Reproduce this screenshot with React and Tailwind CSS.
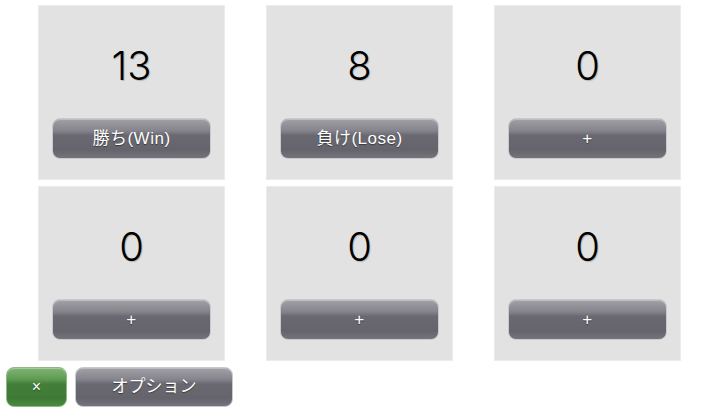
const PANELS = [
  { value: 13, label: "勝ち(Win)" },
  { value: 8, label: "負け(Lose)" },
  { value: 0, label: "+" },
  { value: 0, label: "+" },
  { value: 0, label: "+" },
  { value: 0, label: "+" },
];

function GlossButton({ children, green = false, className = "" }) {
  return (
    <button
      className={`relative overflow-hidden rounded-[8px] border text-white [text-shadow:0_1px_1px_rgba(0,0,0,0.45)] shadow-[inset_0_1px_0_rgba(255,255,255,0.3)] ${
        green
          ? "border-[#8fb886] bg-[linear-gradient(#7fb472_0%,#5f9a53_30%,#437f39_42%,#3e7a35_80%,#4a8a41_100%)]"
          : "border-[#c9c8cc] bg-[linear-gradient(#a2a1a7_0%,#85838b_30%,#6a6870_42%,#65636b_80%,#75737b_100%)]"
      } ${className}`}
    >
      {children}
    </button>
  );
}

export default function App() {
  return (
    <div className="h-[408px] w-[720px] bg-white font-['Liberation_Sans','Noto_Sans_CJK_JP',sans-serif]">
      <div className="grid grid-cols-[187px_187px_187px] gap-x-[41px] gap-y-[6px] pl-[38px] pt-[5px]">
        {PANELS.map((p, i) => (
          <div
            key={i}
            className="flex h-[175px] flex-col items-center border border-[#ececec] bg-[#e2e2e2]"
          >
            <div className="mt-[37px] h-[46px] font-['Inter',sans-serif] text-[40px] font-light leading-[46px] text-black [text-shadow:1px_1px_1px_rgba(0,0,0,0.2)]">
              {p.value}
            </div>
            <GlossButton className="mt-[29px] h-[41px] w-[159px] text-[17px] tracking-[0.5px]">
              {p.label}
            </GlossButton>
          </div>
        ))}
      </div>
      <div className="flex gap-[8px] pl-[6px] pt-[6px]">
        <GlossButton green className="h-[40px] w-[61px] text-[16px]">
          ×
        </GlossButton>
        <GlossButton className="h-[40px] w-[158px] text-[17px]">
          オプション
        </GlossButton>
      </div>
    </div>
  );
}
